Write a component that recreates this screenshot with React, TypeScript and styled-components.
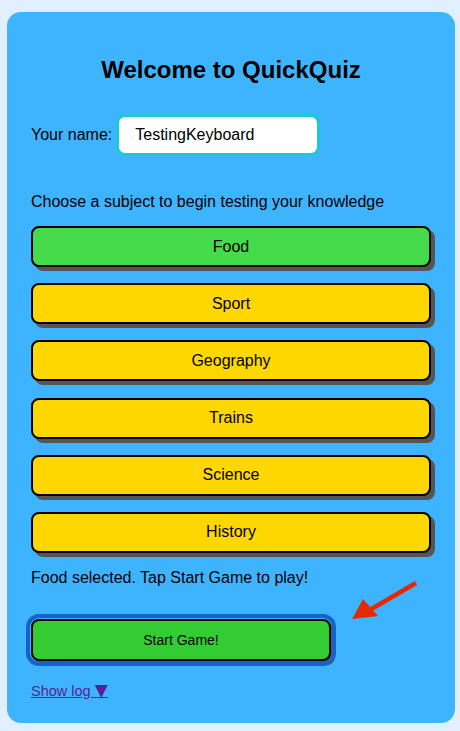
import styled, { createGlobalStyle } from "styled-components";

const GlobalStyle = createGlobalStyle`
    html, body {
        margin: 0;
        padding: 0;
        background: #e1effe;
        font-family: "Liberation Sans", Arial, sans-serif;
    }
`;

const subjects = ["Food", "Sport", "Geography", "Trains", "Science", "History"];

export default function App() {
    const selected = "Food";

    return (
        <Page>
            <GlobalStyle />
            <Card>
                <Title>Welcome to QuickQuiz</Title>
                <NameRow>
                    <NameLabel htmlFor="name">Your name:</NameLabel>
                    <NameInput id="name" defaultValue="TestingKeyboard" />
                </NameRow>
                <Prompt>Choose a subject to begin testing your knowledge</Prompt>
                <SubjectList>
                    {subjects.map((s) => (
                        <SubjectButton key={s} $active={s === selected}>{s}</SubjectButton>
                    ))}
                </SubjectList>
                <Status>{selected} selected. Tap Start Game to play!</Status>
                <StartButton>Start Game!</StartButton>
                <LogLink href="#">Show log <Caret>▼</Caret></LogLink>
                <Arrow width="70" height="42" viewBox="0 0 70 42">
                    <line x1="64" y1="2" x2="16" y2="30" stroke="#e32a00" strokeWidth="4.5" />
                    <polygon points="0,38 11,18 26,35" fill="#e32a00" />
                </Arrow>
            </Card>
        </Page>
    );
}

const Page = styled.div`
    padding: 12px 5px 9px 7px;
`;

const Card = styled.div`
    position: relative;
    background: #3fb4fe;
    border-radius: 14px;
    padding: 44px 24px 22px;
    display: flex;
    flex-direction: column;
    align-items: flex-start;
`;

const Title = styled.h1`
    align-self: stretch;
    margin: 0 0 30px;
    font-size: 24px;
    line-height: 28px;
    font-weight: bold;
    text-align: center;
    color: #000;
`;

const NameRow = styled.div`
    display: flex;
    align-items: center;
    gap: 4px;
`;

const NameLabel = styled.label`
    font-size: 16px;
    color: #000;
`;

const NameInput = styled.input`
    box-sizing: border-box;
    width: 204px;
    height: 42px;
    padding: 0 16px;
    border: 3px solid #1ec8d6;
    border-radius: 9px;
    background: #fff;
    font-family: "Liberation Sans", Arial, sans-serif;
    font-size: 16px;
    color: #000;
    outline: none;
`;

const Prompt = styled.p`
    margin: 36px 0 15px;
    font-size: 16px;
    line-height: 19px;
    color: #000;
`;

const SubjectList = styled.div`
    align-self: stretch;
    display: flex;
    flex-direction: column;
    gap: 16.2px;
`;

const SubjectButton = styled.button<{ $active: boolean }>`
    box-sizing: border-box;
    width: 400px;
    height: 41px;
    border: 2px solid #000;
    border-radius: 8px;
    background: ${(p) => (p.$active ? "#45db4a" : "#ffd700")};
    box-shadow: 4px 4px 0 #555;
    font-family: "Liberation Sans", Arial, sans-serif;
    font-size: 16px;
    color: #000;
    cursor: pointer;
`;

const Status = styled.p`
    margin: 15px 0 32px;
    font-size: 16px;
    line-height: 19px;
    color: #000;
`;

const StartButton = styled.button`
    box-sizing: border-box;
    width: 300px;
    height: 42px;
    border: 2px solid #000;
    border-radius: 8px;
    background: #33cc33;
    box-shadow: 4px 4px 0 #555;
    outline: 4px solid #1463c8;
    outline-offset: 1px;
    font-family: "Liberation Sans", Arial, sans-serif;
    font-size: 14px;
    color: #000;
    cursor: pointer;
`;

const LogLink = styled.a`
    margin-top: 20px;
    font-size: 14.5px;
    line-height: 19px;
    color: #5b1e96;
    text-decoration: underline;
`;

const Caret = styled.span`
    font-family: "DejaVu Sans", sans-serif;
    font-size: 17px;
`;

const Arrow = styled.svg`
    position: absolute;
    left: 345px;
    top: 569px;
`;
